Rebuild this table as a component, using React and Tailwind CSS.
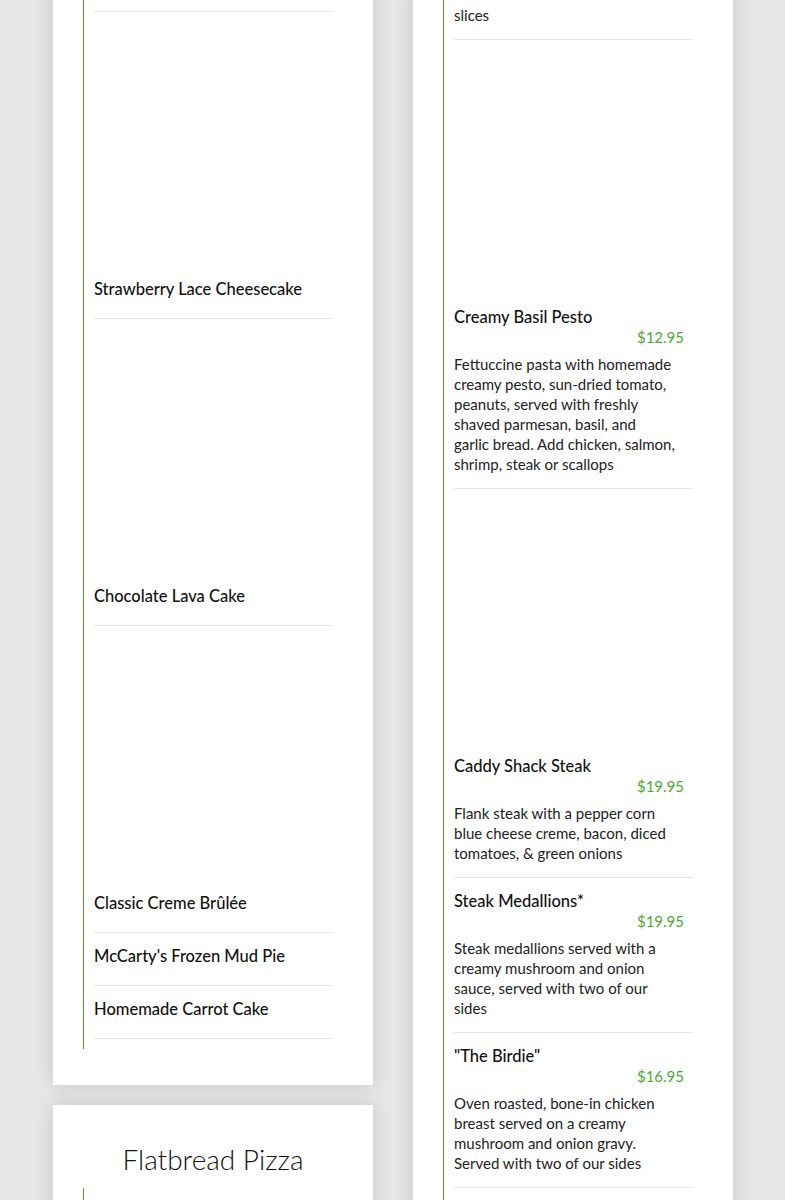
import React from 'react'

const FONT = { fontFamily: 'Lato, "Noto Sans", sans-serif' }

function Item({ name, price, desc, img }) {
  return (
    <div className={`border-b border-[#e6e6e6] pt-[12px] ${desc ? 'pb-[14px]' : 'pb-[18px]'}`}>
      {img && <div className="h-[254px]" />}
      <h4 className="text-[16.5px] leading-[22px] font-medium text-[#111]">{name}</h4>
      {price && (
        <div className="text-right pr-[9px] text-[15px] leading-[18px] text-[#4ca934]">{price}</div>
      )}
      {desc && (
        <p className="mt-[8px] w-[235px] text-[15px] leading-[20px] text-[#222]">
          {desc.map((line, i) => (
            <React.Fragment key={i}>
              {i > 0 && <br />}
              {line}
            </React.Fragment>
          ))}
        </p>
      )}
    </div>
  )
}

function Card({ className = '', title, children }) {
  return (
    <div className={`w-[320px] bg-white shadow-[0_0_18px_rgba(0,0,0,0.14)] pl-[30px] pr-[40px] ${className}`}>
      {title && (
        <h3 className="text-center text-[28px] leading-[32px] font-light text-[#111] -mr-[10px] mb-[13px]">{title}</h3>
      )}
      <div className="border-l border-l-[#5a9628] pl-[10px] pb-[10px]">{children}</div>
    </div>
  )
}

export default function App() {
  return (
    <div className="h-[1200px] overflow-hidden bg-[#e6e6e6]" style={FONT}>
      <div className="flex gap-[40px] pl-[53px]">
        {/* left column */}
        <div className="flex flex-col gap-[20px]">
          <Card className="-mt-[41px] pb-[36px]">
            <Item name="Key Lime Pie" />
            <Item img name="Strawberry Lace Cheesecake" />
            <Item img name="Chocolate Lava Cake" />
            <Item img name="Classic Creme Brûlée" />
            <Item name="McCarty's Frozen Mud Pie" />
            <Item name="Homemade Carrot Cake" />
          </Card>
          <Card className="pt-[38px] pb-[36px]" title="Flatbread Pizza">
            <Item name="Margherita" price="$11.95" desc={['Fresh mozzarella, tomato, basil', 'and olive oil']} />
          </Card>
        </div>

        {/* right column */}
        <div className="flex flex-col">
          <Card className="-mt-[15px] pb-[36px]">
            <div className="border-b border-[#e6e6e6] pb-[14px]">
              <p className="text-[15px] leading-[20px] text-[#222]">
                <span className="relative -top-[5px]">lettuce, pickle and tomato</span>
                <br />
                slices
              </p>
            </div>
            <Item
              img
              name="Creamy Basil Pesto"
              price="$12.95"
              desc={[
                'Fettuccine pasta with homemade',
                'creamy pesto, sun-dried tomato,',
                'peanuts, served with freshly',
                'shaved parmesan, basil, and',
                'garlic bread. Add chicken, salmon,',
                'shrimp, steak or scallops',
              ]}
            />
            <Item
              img
              name="Caddy Shack Steak"
              price="$19.95"
              desc={['Flank steak with a pepper corn', 'blue cheese creme, bacon, diced', 'tomatoes, & green onions']}
            />
            <Item
              name="Steak Medallions*"
              price="$19.95"
              desc={['Steak medallions served with a', 'creamy mushroom and onion', 'sauce, served with two of our', 'sides']}
            />
            <Item
              name={'"The Birdie"'}
              price="$16.95"
              desc={['Oven roasted, bone-in chicken', 'breast served on a creamy', 'mushroom and onion gravy.', 'Served with two of our sides']}
            />
            <Item
              name="Fish & Chips"
              price="$15.95"
              desc={['Beer battered cod served with', 'fries and coleslaw']}
            />
          </Card>
        </div>
      </div>
    </div>
  )
}
